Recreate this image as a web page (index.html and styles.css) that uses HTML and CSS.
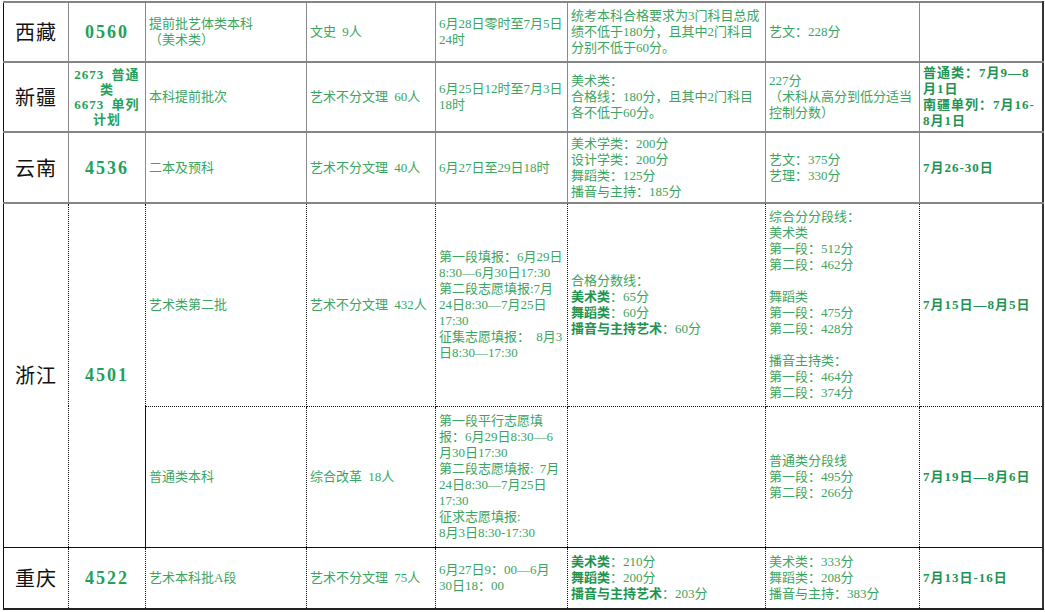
FILE: index.html
```html
<!DOCTYPE html>
<html lang="zh">
<head>
<meta charset="utf-8">
<title>艺术类录取</title>
<link rel="stylesheet" href="styles.css">
</head>
<body>
<table class="grid">
  <colgroup>
    <col class="c1"><col class="c2"><col class="c3"><col class="c4"><col class="c5"><col class="c6"><col class="c7"><col class="c8">
  </colgroup>
  <tr class="r1 top">
    <td class="prov">西藏</td>
    <td class="code">0560</td>
    <td>提前批艺体类本科<br>（美术类）</td>
    <td>文史 9人</td>
    <td>6月28日零时至7月5日<br>24时</td>
    <td>统考本科合格要求为3门科目总成<br>绩不低于180分，且其中2门科目<br>分别不低于60分。</td>
    <td>艺文：228分</td>
    <td class="last"></td>
  </tr>
  <tr class="r2 top">
    <td class="prov">新疆</td>
    <td class="code small">2673 普通<br>类<br>6673 单列<br>计划</td>
    <td>本科提前批次</td>
    <td>艺术不分文理 60人</td>
    <td>6月25日12时至7月3日<br>18时</td>
    <td>美术类：<br>合格线：180分，且其中2门科目<br>各不低于60分。</td>
    <td>227分<br>（术科从高分到低分适当<br>控制分数）</td>
    <td class="last strong">普通类：7月9—8<br>月1日<br>南疆单列：7月16-<br>8月1日</td>
  </tr>
  <tr class="r3 top">
    <td class="prov">云南</td>
    <td class="code">4536</td>
    <td>二本及预科</td>
    <td>艺术不分文理 40人</td>
    <td>6月27日至29日18时</td>
    <td>美术学类：200分<br>设计学类：200分<br>舞蹈类：125分<br>播音与主持：185分</td>
    <td>艺文：375分<br>艺理：330分</td>
    <td class="last strong">7月26-30日</td>
  </tr>
  <tr class="r4 dot">
    <td class="prov" rowspan="2">浙江</td>
    <td class="code" rowspan="2">4501</td>
    <td>艺术类第二批</td>
    <td>艺术不分文理 432人</td>
    <td>第一段填报：6月29日<br>8:30—6月30日17:30<br>第二段志愿填报:7月<br>24日8:30—7月25日<br>17:30<br>征集志愿填报：&nbsp;8月3<br>日8:30—17:30</td>
    <td>合格分数线：<br><b>美术类</b>：65分<br><b>舞蹈类</b>：60分<br><b>播音与主持艺术</b>：60分</td>
    <td>综合分分段线：<br>美术类<br>第一段：512分<br>第二段：462分<br><br>舞蹈类<br>第一段：475分<br>第二段：428分<br><br>播音主持类：<br>第一段：464分<br>第二段：374分</td>
    <td class="last strong">7月15日—8月5日</td>
  </tr>
  <tr class="r5 dot">
    <td>普通类本科</td>
    <td>综合改革 18人</td>
    <td>第一段平行志愿填<br>报：6月29日8:30—6<br>月30日17:30<br>第二段志愿填报: 7月<br>24日8:30—7月25日<br>17:30<br>征求志愿填报:<br>8月3日8:30-17:30</td>
    <td></td>
    <td>普通类分段线<br>第一段：495分<br>第二段：266分</td>
    <td class="last strong">7月19日—8月6日</td>
  </tr>
  <tr class="r6 dot bottom">
    <td class="prov">重庆</td>
    <td class="code">4522</td>
    <td>艺术本科批A段</td>
    <td>艺术不分文理 75人</td>
    <td>6月27日9：00—6月<br>30日18：00</td>
    <td><b>美术类</b>：210分<br><b>舞蹈类</b>：200分<br><b>播音与主持艺术</b>：203分</td>
    <td>美术类：333分<br>舞蹈类：208分<br>播音与主持：383分</td>
    <td class="last strong">7月13日-16日</td>
  </tr>
</table>
</body>
</html>
```

FILE: styles.css
```css
html, body {
  margin: 0;
  padding: 0;
  background: #ffffff;
}

body {
  padding: 1px 0 0 3px;
}

.grid {
  border-collapse: collapse;
  table-layout: fixed;
  width: 1039px;
  font-family: "Liberation Serif", "Noto Sans CJK SC", serif;
  font-size: 13px;
  line-height: 16px;
  word-spacing: 3px;
  color: #3aa561;
}

.c1 { width: 65px; }
.c2 { width: 77px; }
.c3 { width: 161px; }
.c4 { width: 129px; }
.c5 { width: 132px; }
.c6 { width: 198px; }
.c7 { width: 154px; }
.c8 { width: 123px; }

.grid td {
  padding: 0 2px 0 3px;
  vertical-align: middle;
  text-align: left;
  white-space: nowrap;
  overflow: hidden;
  border: 1px dotted #111111;
}

.top td {
  border-top: 2px solid #858585;
  border-bottom: 2px solid #858585;
  border-left: 1px solid #8a8a8a;
  border-right: 1px solid #8a8a8a;
}

.grid td:first-child {
  border-left: 1px solid #111111;
}

.grid td.last {
  border-right: 2px solid #333333;
}

.r1 { height: 60px; }
.r2 { height: 70px; }
.r3 { height: 71px; }
.r4 { height: 203px; }
.r5 { height: 141px; }
.r6 { height: 62px; }

.bottom td {
  border-top: 1px solid #111111;
  border-bottom: 2px solid #222222;
}

.grid td.prov {
  text-align: center;
  color: #111111;
  font-family: "Noto Sans CJK SC", sans-serif;
  font-size: 20px;
  letter-spacing: 1px;
  padding: 0;
}

.grid td.code {
  text-align: center;
  color: #23a15b;
  font-size: 18px;
  font-weight: bold;
  letter-spacing: 2px;
  padding: 0;
}

.grid td.code.small {
  font-size: 13px;
  line-height: 15px;
  letter-spacing: 1px;
}

.grid td.strong {
  font-weight: bold;
  color: #1e9450;
  letter-spacing: 1px;
}

.grid b {
  font-weight: bold;
  color: #1e9450;
}
```
